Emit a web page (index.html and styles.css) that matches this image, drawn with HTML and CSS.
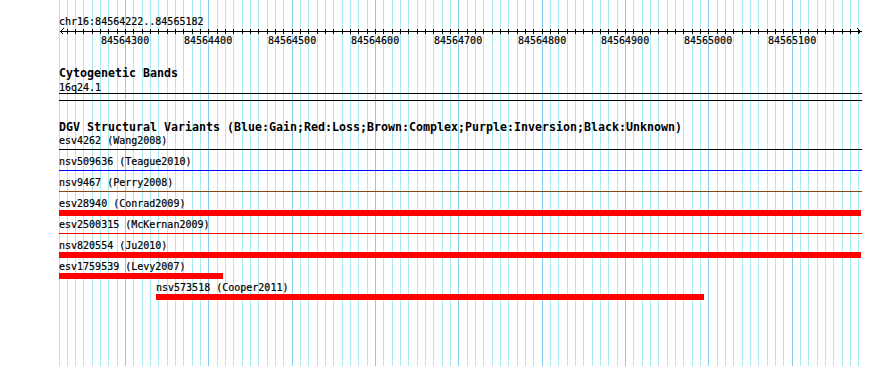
FILE: index.html
```html
<!DOCTYPE html>
<html lang="en">
<head>
    <meta charset="UTF-8">
    <title>chr16:84564222..84565182</title>
    <link rel="stylesheet" href="styles.css">
</head>
<body>

    <div class="browser">
        <!-- grid behind the tracks, drawn by script.js -->
        <svg id="grid" class="grid" width="890" height="366"></svg>

        <div class="panel">
            <div class="ruler">
                <div class="ruler-title">chr16:84564222..84565182</div>
                <svg id="axis" class="axis" width="803" height="6"></svg>
                <div id="tick-labels" class="tick-labels"></div>
            </div>

            <div class="track">
                <div class="track-title">Cytogenetic Bands</div>
                <div class="band-label">16q24.1</div>
                <div class="band"></div>
            </div>

            <div class="track">
                <div class="track-title">DGV Structural Variants (Blue:Gain;Red:Loss;Brown:Complex;Purple:Inversion;Black:Unknown)</div>

                <div class="feature">
                    <div class="feature-label">esv4262 (Wang2008)</div>
                    <div class="feature-line unknown"></div>
                </div>
                <div class="feature">
                    <div class="feature-label">nsv509636 (Teague2010)</div>
                    <div class="feature-line gain"></div>
                </div>
                <div class="feature">
                    <div class="feature-label">nsv9467 (Perry2008)</div>
                    <div class="feature-line complex"></div>
                </div>
                <div class="feature">
                    <div class="feature-label">esv28940 (Conrad2009)</div>
                    <div class="feature-bar loss" style="width: 802px"></div>
                </div>
                <div class="feature">
                    <div class="feature-label">esv2500315 (McKernan2009)</div>
                    <div class="feature-line loss"></div>
                </div>
                <div class="feature">
                    <div class="feature-label">nsv820554 (Ju2010)</div>
                    <div class="feature-bar loss" style="width: 802px"></div>
                </div>
                <div class="feature">
                    <div class="feature-label">esv1759539 (Levy2007)</div>
                    <div class="feature-bar loss" style="width: 164px"></div>
                </div>
                <div class="feature" style="margin-left: 97px">
                    <div class="feature-label">nsv573518 (Cooper2011)</div>
                    <div class="feature-bar loss" style="width: 548px"></div>
                </div>
            </div>
        </div>
    </div>

    <script src="script.js"></script>
</body>
</html>
```

FILE: styles.css
```css
body {
    margin: 0;
    background-color: #fff;
}

.browser {
    position: relative;
    width: 890px;
    height: 366px;
    overflow: hidden;
    font-family: "DejaVu Sans Mono", monospace;
    font-size: 10px;
    color: #000;
    -webkit-text-stroke: 0.2px #000; /* closer to the bitmap font weight */
}

.grid {
    position: absolute;
    top: 0;
    left: 0;
}

.panel {
    position: relative;
    width: 803px;
    margin-left: 59px;
    padding-top: 15px;
}

.ruler-title {
    line-height: 13px;
    white-space: nowrap;
}

.axis {
    display: block;
}

.tick-labels {
    position: relative;
    height: 13px;
    line-height: 13px;
}

.tick-labels span {
    position: absolute;
    top: 0;
}

.track {
    margin-top: 19px;
}

.track-title {
    font-weight: bold;
    font-size: 11.63px;
    line-height: 14px;
    white-space: nowrap;
    -webkit-text-stroke: 0;
}

.band-label {
    margin-top: 1px;
    line-height: 13px;
}

.band {
    margin-top: -1px;
    height: 8px;
    box-sizing: border-box;
    border-top: 1px solid #000;
    border-bottom: 1px solid #000;
}

.feature {
    height: 21px;
}

.feature-label {
    line-height: 13px;
    white-space: nowrap;
}

.feature-line {
    height: 1px;
    margin-top: 2px;
}

.feature-bar {
    height: 6px;
}

.gain { background-color: #0000ff; }
.loss { background-color: #ff0000; }
.complex { background-color: #8b4513; }
.unknown { background-color: #000; }
```

FILE: script.js
```js
// region shown in the panel
const START = 84564222;
const END = 84565182;
const PANEL_LEFT = 59;
const PANEL_RIGHT = 861;
const SVG_NS = 'http://www.w3.org/2000/svg';

// bp -> page x (0.8333 px per bp)
function toX(bp) {
    const x = Math.round(60 + (bp - START) / 1.2);
    return Math.max(PANEL_LEFT, x);
}

function rect(svg, x, y, w, h, color) {
    const r = document.createElementNS(SVG_NS, 'rect');
    r.setAttribute('x', x);
    r.setAttribute('y', y);
    r.setAttribute('width', w);
    r.setAttribute('height', h);
    r.setAttribute('fill', color);
    svg.appendChild(r);
}

// grid lines, every 10 bp, darker every 100 bp
const grid = document.getElementById('grid');
for (let bp = Math.floor(START / 10) * 10; bp <= END; bp += 10) {
    const major = bp % 100 === 0;
    rect(grid, toX(bp), 0, 1, 366, major ? '#88cbee' : '#aaeaf0');
}

// axis with ticks and arrows
const axis = document.getElementById('axis');
rect(axis, 1, 3, PANEL_RIGHT - PANEL_LEFT, 1, '#000');
for (let bp = Math.ceil(START / 10) * 10; bp <= END; bp += 10) {
    const x = toX(bp) - PANEL_LEFT;
    rect(axis, x, 1, 1, 5, '#000');
}
const arrows = document.createElementNS(SVG_NS, 'path');
arrows.setAttribute('d', 'M4.5 0.5 L1.5 3.5 L4.5 6.5 M798.5 0.5 L801.5 3.5 L798.5 6.5');
arrows.setAttribute('stroke', '#000');
arrows.setAttribute('fill', 'none');
arrows.setAttribute('shape-rendering', 'crispEdges');
axis.appendChild(arrows);

// labels under major ticks
const labels = document.getElementById('tick-labels');
for (let bp = Math.ceil(START / 100) * 100; bp <= END; bp += 100) {
    const span = document.createElement('span');
    span.textContent = bp;
    span.style.left = (toX(bp) - PANEL_LEFT - 24) + 'px';
    labels.appendChild(span);
}
```
